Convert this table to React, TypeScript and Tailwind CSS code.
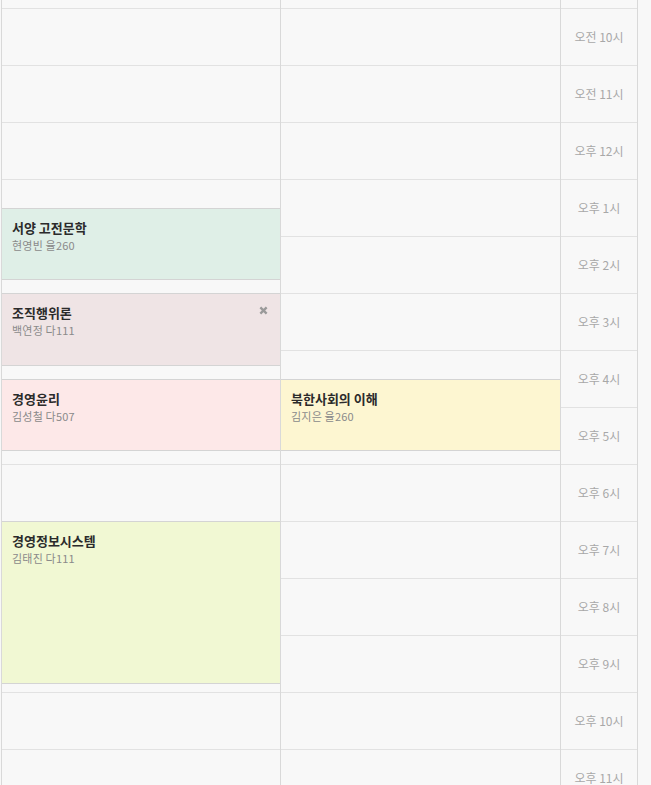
import React from 'react';

// Timetable slice: two day columns plus the hour labels on the right
interface Lecture {
  title: string;
  info: string;
  col: number;
  top: number;
  height: number;
  bg: string;
  removable?: boolean;
}

const hours = [
  '오전 10시',
  '오전 11시',
  '오후 12시',
  '오후 1시',
  '오후 2시',
  '오후 3시',
  '오후 4시',
  '오후 5시',
  '오후 6시',
  '오후 7시',
  '오후 8시',
  '오후 9시',
  '오후 10시',
  '오후 11시',
];

const lectures: Lecture[] = [
  { title: '서양 고전문학', info: '현영빈 율260', col: 0, top: 208, height: 72, bg: 'bg-[#dfefe7]' },
  { title: '조직행위론', info: '백연정 다111', col: 0, top: 293, height: 73, bg: 'bg-[#efe4e5]', removable: true },
  { title: '경영윤리', info: '김성철 다507', col: 0, top: 379, height: 72, bg: 'bg-[#fde8e8]' },
  { title: '북한사회의 이해', info: '김지은 율260', col: 1, top: 379, height: 72, bg: 'bg-[#fdf6d1]' },
  { title: '경영정보시스템', info: '김태진 다111', col: 0, top: 521, height: 163, bg: 'bg-[#f1f8d3]' },
];

function DayColumn({ index }: { index: number }) {
  return (
    <div
      className={
        index === 0
          ? 'relative flex w-[280px] shrink-0 flex-col border-l border-r border-[#d9d9d9]'
          : 'relative flex w-[280px] shrink-0 flex-col border-r border-[#d9d9d9]'
      }
    >
      <div className="h-[9px] border-b border-[#e2e2e2]" />
      {hours.map((h) => (
        <div key={h} className="h-[57px] shrink-0 border-b border-[#e2e2e2]" />
      ))}

      {lectures
        .filter((l) => l.col === index)
        .map((l) => (
          <div
            key={l.title}
            className={`absolute left-0 right-0 border-y border-[#d4d4d4] px-[10px] pt-[10px] ${l.bg}`}
            style={{ top: l.top, height: l.height }}
          >
            <p className="text-[13px] font-bold leading-[17px] text-[#2b2b2b]">{l.title}</p>
            <p className="mt-px text-[11px] leading-[16px] tracking-[0.2px] text-[#8a8a8a]">{l.info}</p>
            {l.removable && (
              <svg
                className="absolute right-[12px] top-[12px] h-[9px] w-[9px]"
                viewBox="0 0 10 10"
                fill="none"
                stroke="#9a9a9a"
                strokeWidth="2.6"
              >
                <path d="M1.5 1.5 L8.5 8.5 M8.5 1.5 L1.5 8.5" />
              </svg>
            )}
          </div>
        ))}
    </div>
  );
}

export default function App() {
  return (
    <div className="h-[785px] w-[651px] overflow-hidden bg-[#f8f8f8] font-['Noto_Sans_CJK_KR',sans-serif]">
      <div className="ml-px flex">
        <DayColumn index={0} />
        <DayColumn index={1} />

        {/* hour labels */}
        <div className="flex w-[77px] shrink-0 flex-col border-r border-[#d9d9d9]">
          <div className="h-[9px] border-b border-[#e2e2e2]" />
          {hours.map((h) => (
            <div
              key={h}
              className="flex h-[57px] shrink-0 items-center justify-center border-b border-[#e2e2e2] text-[12px] text-[#a8a8a8]"
            >
              {h}
            </div>
          ))}
        </div>
      </div>
    </div>
  );
}
